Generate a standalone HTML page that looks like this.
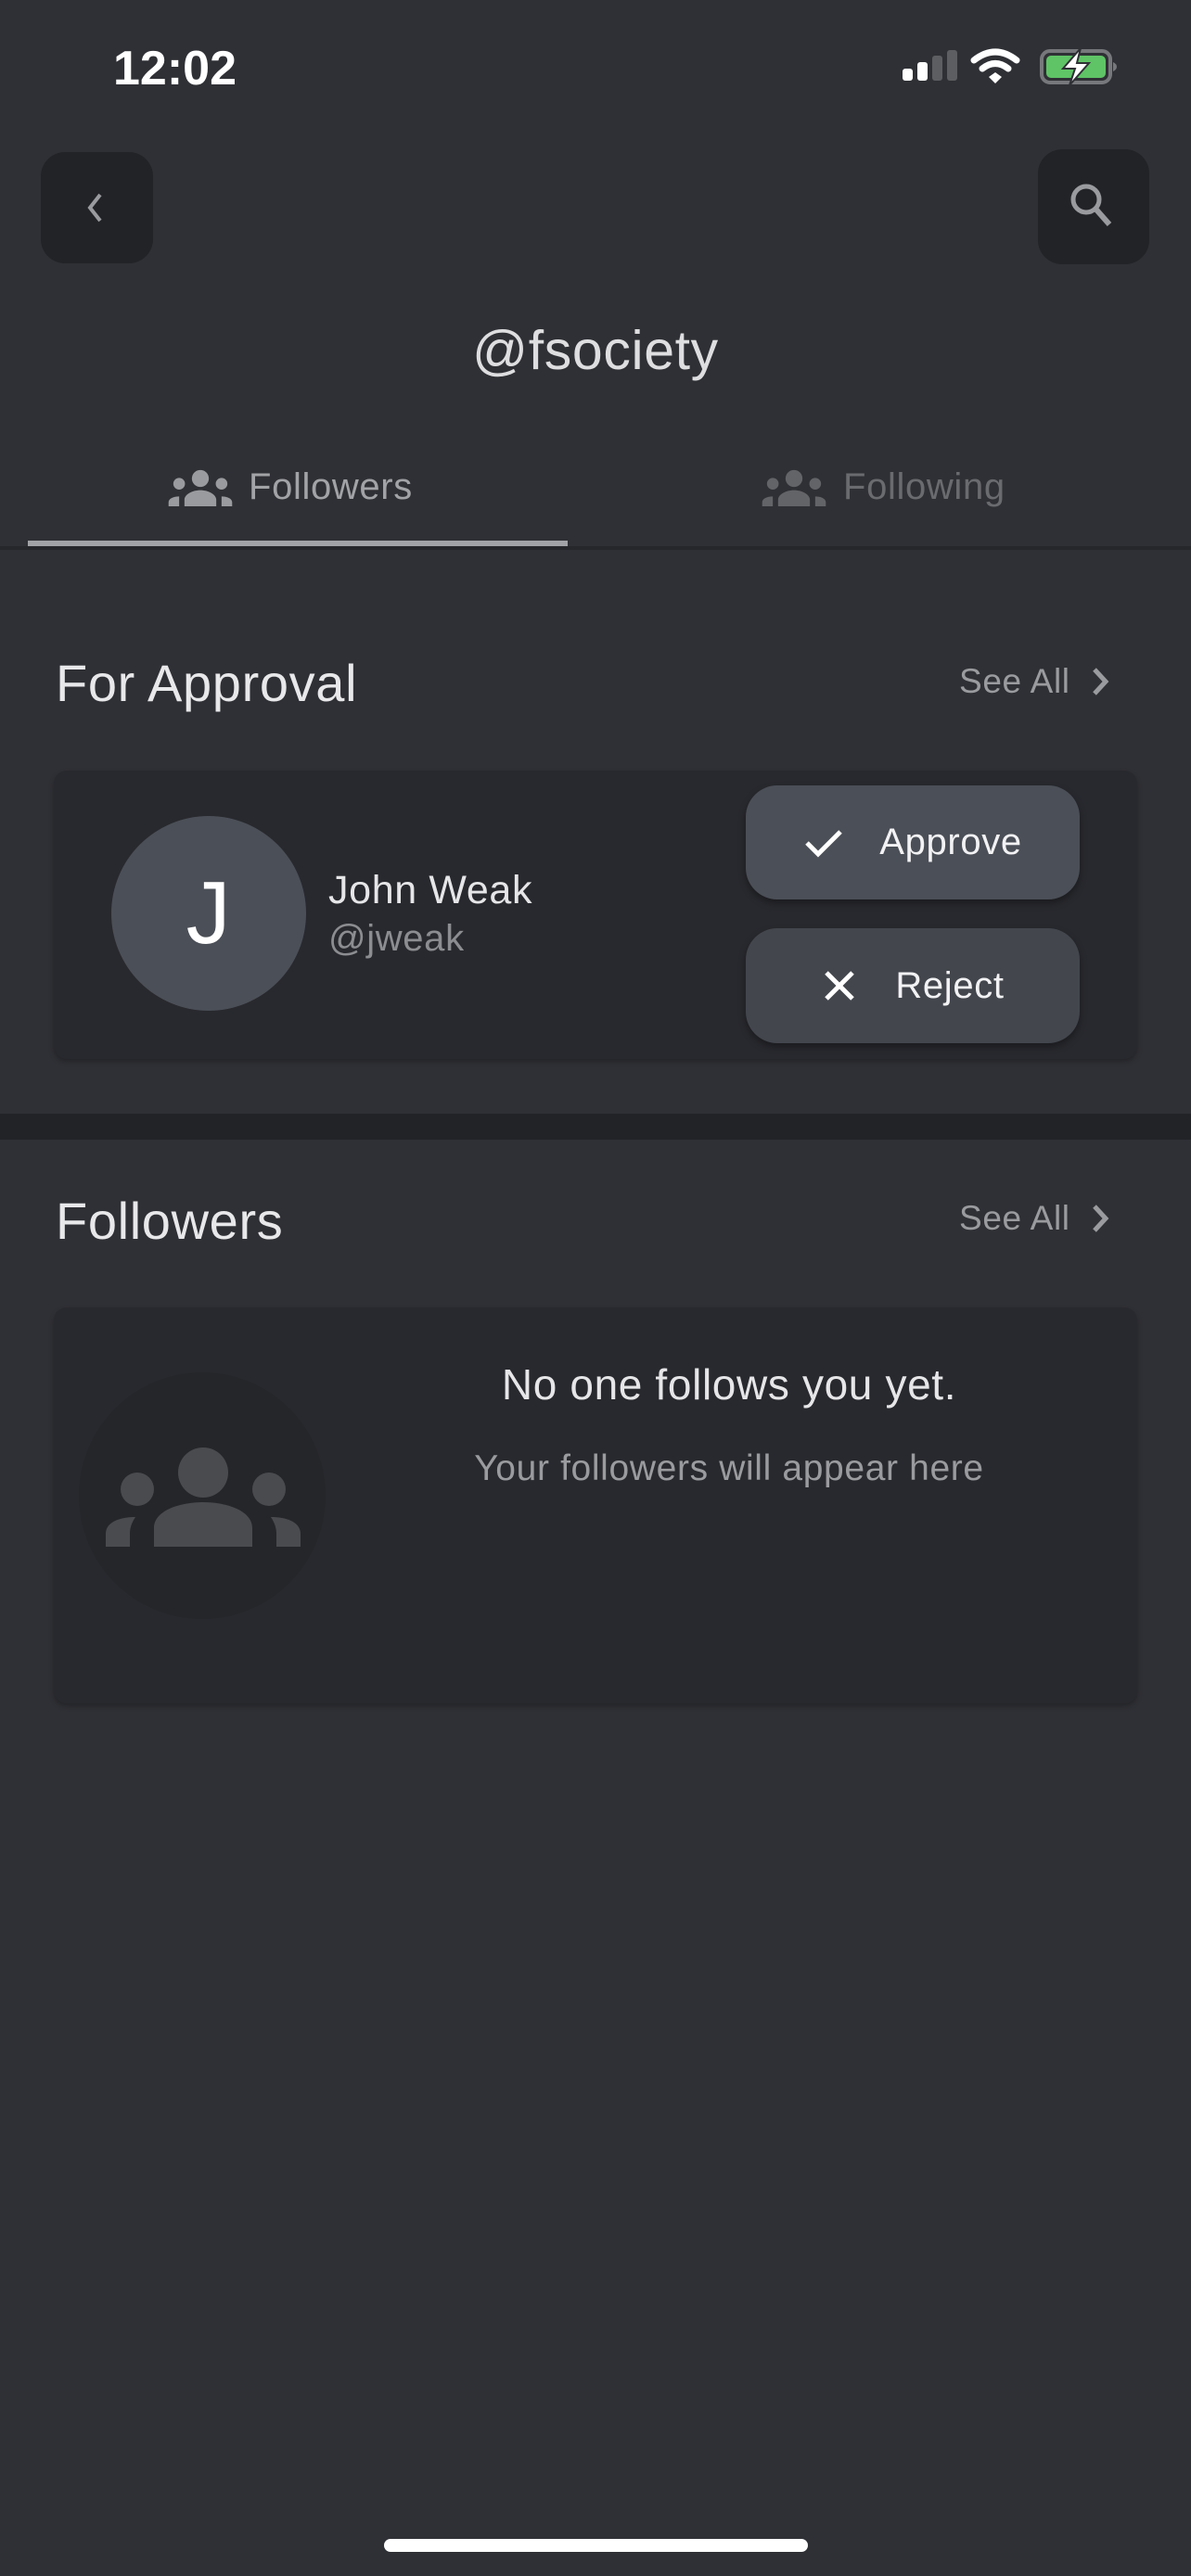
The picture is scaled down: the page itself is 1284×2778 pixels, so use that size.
<!DOCTYPE html>
<html><head><meta charset="utf-8"><style>
*{margin:0;padding:0;box-sizing:border-box}
body{width:1284px;height:2778px;background:#2f3035;font-family:"Liberation Sans",sans-serif;position:relative;overflow:hidden;color:#e6e6e8;letter-spacing:0.04em}
.a{position:absolute}
.btn{border-radius:26px;background:#222327}
.card{background:#28292e;border-radius:14px;box-shadow:0 3px 6px rgba(0,0,0,.25)}
.pill{border-radius:34px;box-shadow:0 4px 8px rgba(0,0,0,.35);display:flex;align-items:center;justify-content:center;font-size:40px;color:#f2f2f4}
</style></head><body>
<div class="a" style="left:122px;top:44px;font-size:52px;font-weight:bold;color:#fff;letter-spacing:0">12:02</div>
<svg class="a" style="left:970px;top:50px" width="240" height="48" viewBox="0 0 240 48">
<rect x="3" y="24" width="11" height="13" rx="3" fill="#fff"/>
<rect x="19" y="17" width="11" height="20" rx="3" fill="#fff"/>
<rect x="35" y="10" width="11" height="27" rx="3" fill="#5d5e62"/>
<rect x="51" y="4" width="11" height="33" rx="3" fill="#5d5e62"/>
<path d="M80 15 Q103 -3 126 15" stroke="#fff" stroke-width="7" fill="none" stroke-linecap="round"/>
<path d="M89 24 Q103 13 117 24" stroke="#fff" stroke-width="7" fill="none" stroke-linecap="round"/>
<path d="M96 33 L103 28 L110 33 L103 40Z" fill="#fff"/>
<rect x="153" y="5" width="74" height="34" rx="9" fill="none" stroke="#77787c" stroke-width="4"/>
<rect x="158" y="10" width="64" height="24" rx="5" fill="#5fc466"/>
<path d="M230 17 v10 q4-2 4-5 q0-3-4-5z" fill="#77787c"/>
<path d="M195 2 L176 24 H189 L183 42 L204 18 H191 Z" fill="#fff" stroke="#2f3035" stroke-width="2"/>
</svg>
<div class="a btn" style="left:44px;top:164px;width:121px;height:120px"></div>
<svg class="a" style="left:88px;top:206px" width="30" height="36"><path d="M20 4 L9 18 L20 32" stroke="#9a9b9e" stroke-width="4" fill="none"/></svg>
<div class="a btn" style="left:1119px;top:161px;width:120px;height:124px"></div>
<svg class="a" style="left:1148px;top:192px" width="60" height="60"><circle cx="23" cy="23" r="14" stroke="#9a9b9e" stroke-width="5" fill="none"/><path d="M33 33 L48 50" stroke="#9a9b9e" stroke-width="6"/></svg>
<div class="a" style="left:0;width:1284px;top:344px;text-align:center;font-size:59px;color:#dedee0">@fsociety</div>
<svg class="a" style="left:180px;top:506px" width="72" height="40" viewBox="0 0 24 14"><circle cx="12" cy="3.5" r="3.2" fill="#9a9b9e"/><circle cx="4" cy="5.5" r="2.2" fill="#9a9b9e"/><circle cx="20" cy="5.5" r="2.2" fill="#9a9b9e"/><path d="M6 14v-2.5c0-2 3-3.6 6-3.6s6 1.6 6 3.6V14z M0 14v-1.5c0-1.2 1.5-2.2 4-2.2v3.7z M24 14v-1.5c0-1.2-1.5-2.2-4-2.2v3.7z" fill="#9a9b9e"/></svg>
<div class="a" style="left:268px;top:503px;font-size:40px;color:#a2a3a6">Followers</div>
<svg class="a" style="left:820px;top:506px" width="72" height="40" viewBox="0 0 24 14"><circle cx="12" cy="3.5" r="3.2" fill="#636468"/><circle cx="4" cy="5.5" r="2.2" fill="#636468"/><circle cx="20" cy="5.5" r="2.2" fill="#636468"/><path d="M6 14v-2.5c0-2 3-3.6 6-3.6s6 1.6 6 3.6V14z M0 14v-1.5c0-1.2 1.5-2.2 4-2.2v3.7z M24 14v-1.5c0-1.2-1.5-2.2-4-2.2v3.7z" fill="#636468"/></svg>
<div class="a" style="left:909px;top:503px;font-size:40px;color:#6a6b6f">Following</div>
<div class="a" style="left:30px;top:583px;width:582px;height:6px;background:#a2a3a6"></div>
<div class="a" style="left:0;top:589px;width:1284px;height:4px;background:#26272b"></div>

<div class="a" style="left:60px;top:704px;font-size:56px;color:#e8e8ea">For Approval</div>
<div class="a" style="left:1034px;top:714px;font-size:37px;color:#9a9b9e">See All</div>
<svg class="a" style="left:1172px;top:716px" width="30" height="40"><path d="M8 6 L20 19 L8 32" stroke="#9a9b9e" stroke-width="5" fill="none"/></svg>
<div class="a card" style="left:58px;top:831px;width:1168px;height:311px"></div>
<div class="a" style="left:120px;top:880px;width:210px;height:210px;border-radius:50%;background:#4b4f57;display:flex;align-items:center;justify-content:center;font-size:96px;color:#fff">J</div>
<div class="a" style="left:354px;top:936px;font-size:43px;color:#e6e6e8">John Weak</div>
<div class="a" style="left:354px;top:990px;font-size:40px;color:#8c8d91">@jweak</div>
<div class="a pill" style="left:804px;top:847px;width:360px;height:123px;background:#4b4f57"><svg width="44" height="40" style="margin-right:38px"><path d="M4 20 L16 32 L40 8" stroke="#fff" stroke-width="5" fill="none"/></svg>Approve</div>
<div class="a pill" style="left:804px;top:1001px;width:360px;height:124px;background:#43464d"><svg width="40" height="40" style="margin-right:40px"><path d="M6 6 L34 34 M34 6 L6 34" stroke="#fff" stroke-width="5"/></svg>Reject</div>

<div class="a" style="left:0;top:1201px;width:1284px;height:28px;background:#222327"></div>

<div class="a" style="left:60px;top:1284px;font-size:56px;color:#e8e8ea">Followers</div>
<div class="a" style="left:1034px;top:1293px;font-size:37px;color:#9a9b9e">See All</div>
<svg class="a" style="left:1172px;top:1295px" width="30" height="40"><path d="M8 6 L20 19 L8 32" stroke="#9a9b9e" stroke-width="5" fill="none"/></svg>
<div class="a card" style="left:58px;top:1410px;width:1168px;height:427px"></div>
<div class="a" style="left:85px;top:1480px;width:266px;height:266px;border-radius:50%;background:#25262a"></div>
<svg class="a" style="left:112px;top:1560px" width="214" height="110" viewBox="0 0 214 110"><circle cx="107" cy="28" r="27" fill="#4a4b4f"/><circle cx="36" cy="46" r="18" fill="#4a4b4f"/><circle cx="178" cy="46" r="18" fill="#4a4b4f"/><path d="M54 108 v-20 c0-20 30-28 53-28 s53 8 53 28 v20z M2 108 v-14 c0-12 14-18 32-18 c-4 6 -6 12 -6 18 v14z M212 108 v-14 c0-12-14-18-32-18 c4 6 6 12 6 18 v14z" fill="#4a4b4f"/></svg>
<div class="a" style="left:350px;width:872px;top:1466px;text-align:center;font-size:46px;color:#e6e6e8">No one follows you yet.</div>
<div class="a" style="left:350px;width:872px;top:1562px;text-align:center;font-size:39px;color:#9a9b9e">Your followers will appear here</div>

<div class="a" style="left:414px;top:2738px;width:457px;height:14px;border-radius:7px;background:#fff"></div>
</body></html>
